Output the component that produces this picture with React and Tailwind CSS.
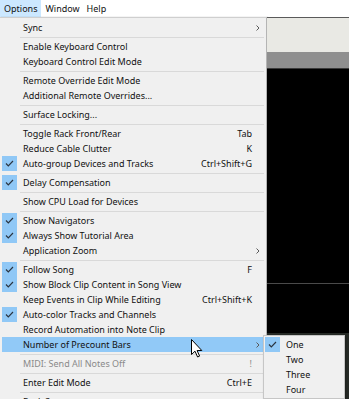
import React from "react";

const MENU = [
  { label: "Sync", submenu: true },
  { sep: true },
  { label: "Enable Keyboard Control" },
  { label: "Keyboard Control Edit Mode" },
  { sep: true },
  { label: "Remote Override Edit Mode" },
  { label: "Additional Remote Overrides..." },
  { sep: true },
  { label: "Surface Locking..." },
  { sep: true },
  { label: "Toggle Rack Front/Rear", shortcut: "Tab" },
  { label: "Reduce Cable Clutter", shortcut: "K" },
  { label: "Auto-group Devices and Tracks", shortcut: "Ctrl+Shift+G", checked: true },
  { sep: true },
  { label: "Delay Compensation", checked: true },
  { sep: true },
  { label: "Show CPU Load for Devices" },
  { sep: true },
  { label: "Show Navigators", checked: true },
  { label: "Always Show Tutorial Area", checked: true },
  { label: "Application Zoom", submenu: true },
  { sep: true },
  { label: "Follow Song", shortcut: "F", checked: true },
  { label: "Show Block Clip Content in Song View", checked: true },
  { label: "Keep Events in Clip While Editing", shortcut: "Ctrl+Shift+K" },
  { label: "Auto-color Tracks and Channels", checked: true },
  { label: "Record Automation into Note Clip" },
  { label: "Number of Precount Bars", submenu: true, active: true },
  { sep: true },
  { label: "MIDI: Send All Notes Off", shortcut: "!", disabled: true },
  { sep: true },
  { label: "Enter Edit Mode", shortcut: "Ctrl+E" },
  { sep: true },
  { label: "Rack Setup" },
];

const PRECOUNT = [
  { label: "One", checked: true },
  { label: "Two" },
  { label: "Three" },
  { label: "Four" },
];

function Check() {
  return (
    <svg width="9" height="7" viewBox="0 0 9 7" fill="none">
      <path d="M1 3.5 L3.3 5.8 L8 1" stroke="#2a3440" strokeWidth="1.2" />
    </svg>
  );
}

function Chevron() {
  return (
    <svg width="4" height="6" viewBox="0 0 4 6" fill="none">
      <path d="M0.5 0.5 L3 3 L0.5 5.5" stroke="#5a5a5a" strokeWidth="1" />
    </svg>
  );
}

function MenuItem({ item }) {
  return (
    <div className={`flex h-[15px] items-center ${item.active ? "bg-[#91c9f7]" : ""}`}>
      <div
        className={`flex h-[15px] w-[15px] shrink-0 items-center justify-center ${
          item.checked ? "bg-[#90c8f6]" : ""
        }`}
      >
        {item.checked && <Check />}
      </div>
      <span
        className={`ml-[6px] flex-1 whitespace-nowrap ${
          item.disabled ? "text-[#8a8a8a]" : "text-[#111]"
        }`}
      >
        {item.label}
      </span>
      {item.shortcut && (
        <span className={`whitespace-nowrap ${item.disabled ? "text-[#8a8a8a]" : "text-[#111]"}`}>
          {item.shortcut}
        </span>
      )}
      <div className="flex w-[12px] shrink-0 justify-center">{item.submenu && <Chevron />}</div>
    </div>
  );
}

function Cursor() {
  return (
    <svg width="12" height="19" viewBox="0 0 12 19" className="absolute left-[191px] top-[339px]">
      <path
        d="M0.5 0.5 L0.5 15.5 L4 12.2 L6.6 18 L8.6 17.1 L6.1 11.5 L10.8 11.5 Z"
        fill="#fff"
        stroke="#000"
        strokeWidth="1"
        strokeLinejoin="round"
      />
    </svg>
  );
}

export default function App() {
  return (
    <div className="relative h-[399px] w-[349px] overflow-hidden bg-[#f0f0f0] font-['Noto_Sans',sans-serif] text-[9px] leading-none text-[#111]">
      {/* menu bar */}
      <div className="flex h-[17px] bg-white">
        <div className="flex items-center bg-[#cce8ff] px-[4px]">Options</div>
        <div className="flex items-center px-[4px]">Window</div>
        <div className="flex items-center px-[3px]">Help</div>
      </div>

      <div className="flex h-[382px]">
        {/* options dropdown */}
        <div className="w-[267px] shrink-0 border-t border-r border-t-[#cfcfcf] border-r-[#b4b4b4] bg-[#f0f0f0] pt-[2px] shadow-[1px_0_1px_rgba(0,0,0,0.25)]">
          {MENU.map((item, i) =>
            item.sep ? (
              <div key={i} className="flex h-[4px] items-center pl-[20px] pr-[2px]">
                <div className="h-px w-full bg-[#d9d9d9]" />
              </div>
            ) : (
              <div key={i} className="mx-[2px]">
                <MenuItem item={item} />
              </div>
            )
          )}
        </div>

        {/* app behind the menu */}
        <div className="flex flex-1 flex-col">
          <div className="h-px bg-[#5a5a5a]" />
          <div className="h-[34px] bg-[#e9e9e4]" />
          <div className="h-[16px] bg-[#8f8f8f]" />
          <div className="h-px bg-[#3a3a3a]" />
          <div className="h-[214px] bg-black" />
          <div className="h-px bg-[#4a4a4a]" />
          <div className="h-[49px] bg-black" />
          <div className="flex-1 bg-[#262a26]" />
        </div>
      </div>

      {/* precount submenu */}
      <div className="absolute left-[263px] top-[335px] w-[82px] border border-[#c6c6c6] bg-[#f0f0f0] py-[1px] shadow-[1px_1px_2px_rgba(0,0,0,0.25)]">
        {PRECOUNT.map((item) => (
          <div key={item.label} className="ml-[1px]">
            <MenuItem item={item} />
          </div>
        ))}
      </div>

      <Cursor />
    </div>
  );
}
